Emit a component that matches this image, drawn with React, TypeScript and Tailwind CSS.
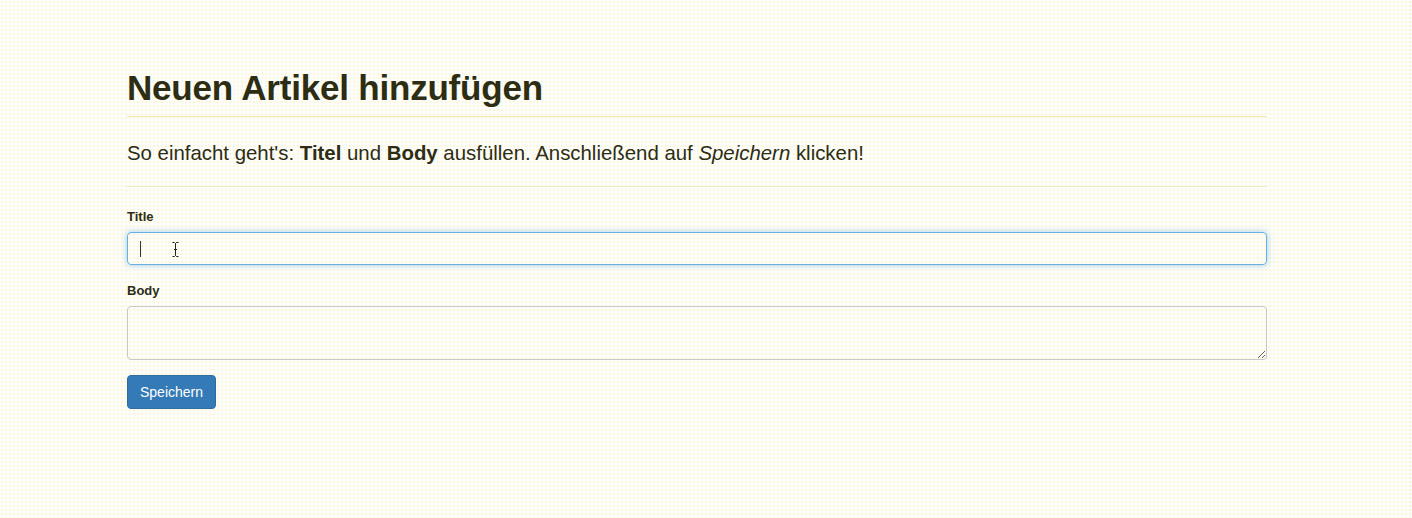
export default function App() {
  return (
    <div className="min-h-[518px] w-full bg-[#fcfcfd] bg-[radial-gradient(circle,#faf3a0_0.6px,transparent_0.8px)] bg-[length:4px_4px] font-['Liberation_Sans',Arial,sans-serif] text-[#2d2d14]">
      <div className="ml-[127px] w-[1140px] pt-[68px]">
        <div className="border-b border-[#efeab8] pb-[8px]">
          <h1 className="text-[35px] leading-[40px] font-bold tracking-[-0.2px]">Neuen Artikel hinzufügen</h1>
        </div>
        <p className="mt-[24px] text-[20.4px] leading-[24px]">
          So einfacht geht's: <b>Titel</b> und <b>Body</b> ausfüllen. Anschließend auf <i>Speichern</i> klicken!
        </p>
        <hr className="mt-[21px] border-0 border-t border-[#efeab8]" />

        <form className="mt-[22px]">
          <label className="block text-[13px] leading-[16px] font-bold">Title</label>
          <div className="relative mt-[7px]">
            <input
              type="text"
              className="block h-[33px] w-full rounded-[4px] border border-[#66afe9] bg-transparent px-[12px] text-[14px] shadow-[0_0_6px_rgba(102,175,233,0.6)] outline-none"
            />
            <span className="absolute left-[13px] top-[9px] h-[16px] w-px bg-[#333]" />
            <svg className="absolute left-[45px] top-[10px]" width="7" height="15" viewBox="0 0 7 15">
              <path d="M0.5 0.5h2l1 1 1-1h2M3.5 1.5v12M0.5 14.5h2l1-1 1 1h2M2 7.5h3" stroke="#222" strokeWidth="1" fill="none" />
            </svg>
          </div>

          <label className="mt-[18px] block text-[13px] leading-[16px] font-bold">Body</label>
          <textarea className="mt-[7px] block h-[54px] w-full rounded-[4px] border border-[#c8c8c8] bg-transparent px-[12px] py-[6px] text-[14px] outline-none" />

          <button
            type="button"
            className="mt-[15px] h-[34px] w-[89px] rounded-[4px] border border-[#2e6da4] bg-[#337ab7] text-[14px] text-white"
          >
            Speichern
          </button>
        </form>
      </div>
    </div>
  );
}
